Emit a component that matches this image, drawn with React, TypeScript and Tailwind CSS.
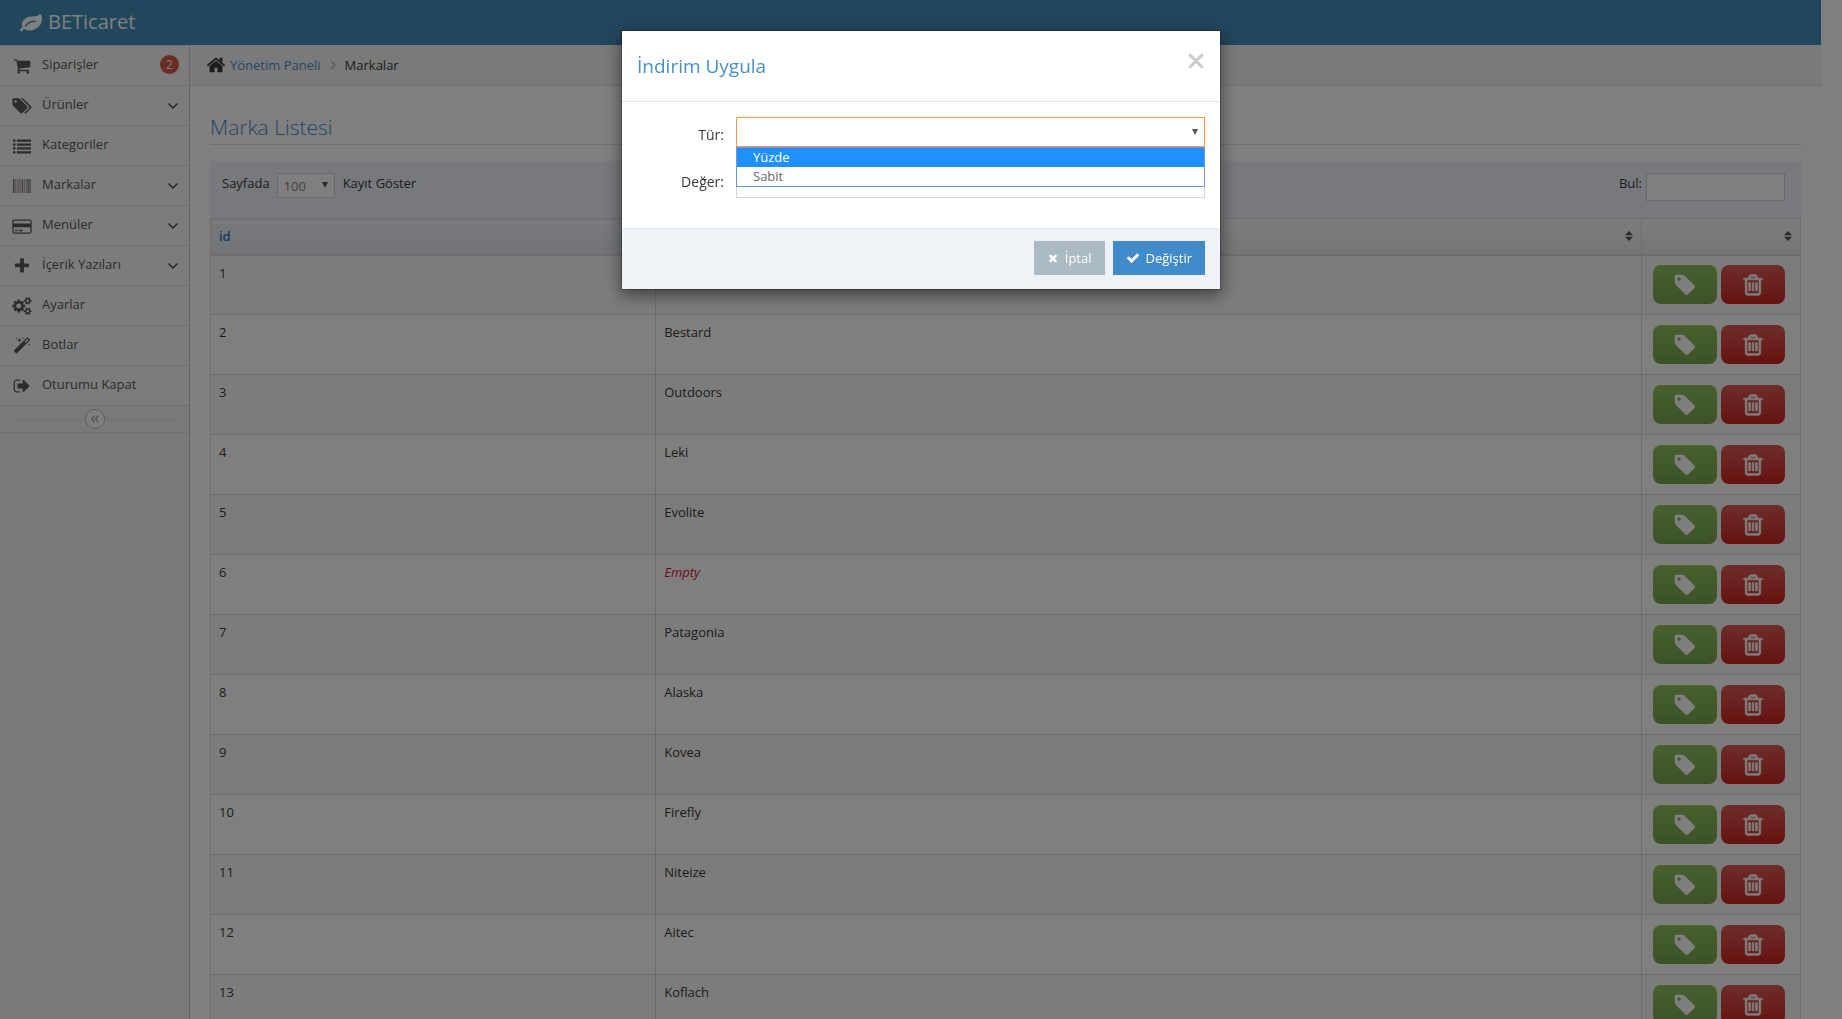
import type { ReactNode } from "react";

const ICONS = {
  leaf: "M1280 832q0-26-19-45t-45-19q-172 0-318 49.5t-259.5 134-235.5 219.5q-19 21-19 45 0 26 19 45t45 19q24 0 45-19 27-24 74-71t67-66q137-124 268.5-176t313.5-52q26 0 45-19t19-45zm512-198q0 95-20 193-46 224-184.5 383t-357.5 268q-214 108-438 108-148 0-286-47-15-5-88-42t-96-37q-16 0-39.5 32t-45 70-52.5 70-60 32q-43 0-63.5-17.5t-45.5-59.5q-2-4-6-11t-5.5-10-3-9.5-1.5-13.5q0-35 31-73.5t68-65.5 68-56 31-48q0-4-14-38t-16-44q-9-51-9-104 0-115 43.5-220t119-184.5 170.5-139 204-95.5q55-18 145-25.5t179.5-9 178.5-6 163.5-24 113.5-56.5l29.5-29.5 29.5-28 27-20 36.5-16 43.5-4.5q39 0 70.5 46t47.5 112 24 124 8 96z",
  cart: "M704 1536q0 52-38 90t-90 38-90-38-38-90 38-90 90-38 90 38 38 90zm896 0q0 52-38 90t-90 38-90-38-38-90 38-90 90-38 90 38 38 90zm128-1088v512q0 24-16.5 42.5t-40.5 21.5l-1044 122q13 60 13 70 0 16-24 64h920q26 0 45 19t19 45-19 45-45 19h-1024q-26 0-45-19t-19-45q0-11 8-31.5t16-36 21.5-40 15.5-29.5l-177-823h-204q-26 0-45-19t-19-45 19-45 45-19h256q16 0 28.5 6.5t19.5 15.5 13 24.5 8 26 5.5 29.5 4.5 26h1201q26 0 45 19t19 45z",
  tags: "M448 448q0-53-37.5-90.5t-90.5-37.5-90.5 37.5-37.5 90.5 37.5 90.5 90.5 37.5 90.5-37.5 37.5-90.5zm1067 576q0 53-37 90l-491 492q-39 37-91 37-53 0-90-37l-715-716q-38-37-64.5-101t-26.5-117v-416q0-52 38-90t90-38h416q53 0 117 26.5t102 64.5l715 714q37 39 37 91zm384 0q0 53-37 90l-491 492q-39 37-91 37-36 0-59-14t-53-45l470-470q37-37 37-90 0-52-37-91l-715-714q-38-38-102-64.5t-117-26.5h224q53 0 117 26.5t102 64.5l715 714q37 39 37 91z",
  tag: "M576 448q0-53-37.5-90.5t-90.5-37.5-90.5 37.5-37.5 90.5 37.5 90.5 90.5 37.5 90.5-37.5 37.5-90.5zm1067 576q0 53-37 90l-491 492q-39 37-91 37-53 0-90-37l-715-716q-38-37-64.5-101t-26.5-117v-416q0-52 38-90t90-38h416q53 0 117 26.5t102 64.5l715 714q37 39 37 91z",
  list: "M0 256h256v224h-256zM384 256h1408v224h-1408zM0 640h256v224h-256zM384 640h1408v224h-1408zM0 1024h256v224h-256zM384 1024h1408v224h-1408zM0 1408h256v224h-256zM384 1408h1408v224h-1408z",
  card: "M160 256h1600q66 0 113 47t47 113v1088q0 66-47 113t-113 47h-1600q-66 0-113-47t-47-113v-1088q0-66 47-113t113-47zm0 128q-32 0-32 32v224h1664v-224q0-32-32-32zm-32 640v480q0 32 32 32h1600q32 0 32-32v-480zM256 1280h256v128h-256zM640 1280h384v128h-384z",
  plus: "M1600 736v192q0 40-28 68t-68 28h-416v416q0 40-28 68t-68 28h-192q-40 0-68-28t-28-68v-416h-416q-40 0-68-28t-28-68v-192q0-40 28-68t68-28h416v-416q0-40 28-68t68-28h192q40 0 68 28t28 68v416h416q40 0 68 28t28 68z",
  cogs: "M896 896q0-106-75-181t-181-75-181 75-75 181 75 181 181 75 181-75 75-181zm768 512q0-52-38-90t-90-38-90 38-38 90q0 53 37.5 90.5t90.5 37.5 90.5-37.5 37.5-90.5zm0-1024q0-52-38-90t-90-38-90 38-38 90q0 53 37.5 90.5t90.5 37.5 90.5-37.5 37.5-90.5zm-384 421v185q0 10-7 19.5t-16 10.5l-155 24q-11 35-32 76 34 48 90 115 7 11 7 20 0 12-7 19-23 30-82.5 89.5t-78.5 59.5q-11 0-21-7l-115-90q-37 19-77 31-11 108-23 155-7 24-30 24h-186q-11 0-20-7.5t-10-17.5l-23-153q-34-10-75-31l-118 89q-7 7-20 7-11 0-21-8-144-133-144-160 0-9 7-19 10-14 41-53t47-61q-23-44-35-82l-152-24q-10-1-17-9.5t-7-19.5v-185q0-10 7-19.5t16-10.5l155-24q11-35 32-76-34-48-90-115-7-11-7-20 0-12 7-20 22-30 82-89t79-59q11 0 21 7l115 90q34-18 77-32 11-108 23-154 7-24 30-24h186q11 0 20 7.5t10 17.5l23 153q34 10 75 31l118-89q8-7 20-7 11 0 21 8 144 133 144 160 0 9-7 19-12 16-42 54t-45 60q23 48 34 82l152 23q10 2 17 10.5t7 19.5zm640 533v140q0 16-149 31-12 27-30 52 51 113 51 138 0 4-4 7-122 71-124 71-8 0-46-47t-52-68q-20 2-30 2t-30-2q-14 21-52 68t-46 47q-2 0-124-71-4-3-4-7 0-25 51-138-18-25-30-52-149-15-149-31v-140q0-16 149-31 13-29 30-52-51-113-51-138 0-4 4-7 4-2 35-20t59-34 30-16q8 0 46 46.5t52 67.5q20-2 30-2t30 2q51-71 92-112l6-2q4 0 124 70 4 3 4 7 0 25-51 138 17 23 30 52 149 15 149 31zm0-1024v140q0 16-149 31-12 27-30 52 51 113 51 138 0 4-4 7-122 71-124 71-8 0-46-47t-52-68q-20 2-30 2t-30-2q-14 21-52 68t-46 47q-2 0-124-71-4-3-4-7 0-25 51-138-18-25-30-52-149-15-149-31v-140q0-16 149-31 13-29 30-52-51-113-51-138 0-4 4-7 4-2 35-20t59-34 30-16q8 0 46 46.5t52 67.5q20-2 30-2t30 2q51-71 92-112l6-2q4 0 124 70 4 3 4 7 0 25-51 138 17 23 30 52 149 15 149 31z",
  magic: "M1254 581l293-293-107-107-293 293zm447-293q0 27-18 45l-1286 1286q-18 18-45 18t-45-18l-198-198q-18-18-18-45t18-45l1286-1286q18-18 45-18t45 18l198 198q18 18 18 45zm-1351-190l98 30-98 30-30 98-30-98-98-30 98-30 30-98zm350 162l196 60-196 60-60 196-60-196-196-60 196-60 60-196zm930 478l98 30-98 30-30 98-30-98-98-30 98-30 30-98zm-640-640l98 30-98 30-30 98-30-98-98-30 98-30 30-98z",
  signOut: "M704 1440q0 4 1 20t.5 26.5-3 23.5-10 19.5-20.5 6.5h-320q-119 0-203.5-84.5t-84.5-203.5v-704q0-119 84.5-203.5t203.5-84.5h320q13 0 22.5 9.5t9.5 22.5q0 4 1 20t.5 26.5-3 23.5-10 19.5-20.5 6.5h-320q-66 0-113 47t-47 113v704q0 66 47 113t113 47h312l11.5 1 11.5 3 8 5.5 7 9 2 13.5zm928-544q0 26-19 45l-544 544q-19 19-45 19t-45-19-19-45v-288h-448q-26 0-45-19t-19-45v-384q0-26 19-45t45-19h448v-288q0-26 19-45t45-19 45 19l544 544q19 19 19 45z",
  home: "M1472 992v480q0 26-19 45t-45 19h-384v-384h-256v384h-384q-26 0-45-19t-19-45v-480q0-1 .5-3t.5-3l575-474 575 474q1 2 1 6zm223-69l-62 74q-8 9-21 11h-3q-13 0-21-7l-692-577-692 577q-12 8-24 7-13-2-21-11l-62-74q-8-10-7-23.5t11-21.5l719-599q32-26 76-26t76 26l244 204v-195q0-14 9-23t23-9h192q14 0 23 9t9 23v408l219 182q10 8 11 21.5t-7 23.5z",
  trash: "M704 736v576q0 14-9 23t-23 9h-64q-14 0-23-9t-9-23v-576q0-14 9-23t23-9h64q14 0 23 9t9 23zm256 0v576q0 14-9 23t-23 9h-64q-14 0-23-9t-9-23v-576q0-14 9-23t23-9h64q14 0 23 9t9 23zm256 0v576q0 14-9 23t-23 9h-64q-14 0-23-9t-9-23v-576q0-14 9-23t23-9h64q14 0 23 9t9 23zm128 724v-948h-896v948q0 22 7 40.5t14.5 27 10.5 8.5h832q3 0 10.5-8.5t14.5-27 7-40.5zm-672-1076h448l-48-117q-7-9-17-11h-317q-10 2-17 11zm928 32v64q0 14-9 23t-23 9h-96v948q0 83-47 143.5t-113 60.5h-832q-66 0-113-58.5t-47-141.5v-952h-96q-14 0-23-9t-9-23v-64q0-14 9-23t23-9h309l70-167q15-37 54-63t79-26h320q40 0 79 26t54 63l70 167h309q14 0 23 9t9 23z",
  times: "M1490 1322q0 40-28 68l-136 136q-28 28-68 28t-68-28l-294-294-294 294q-28 28-68 28t-68-28l-136-136q-28-28-28-68t28-68l294-294-294-294q-28-28-28-68t28-68l136-136q28-28 68-28t68 28l294 294 294-294q28-28 68-28t68 28l136 136q28 28 28 68t-28 68l-294 294 294 294q28 28 28 68z",
  check: "M1671 566q0 40-28 68l-724 724-136 136q-28 28-68 28t-68-28l-136-136-362-362q-28-28-28-68t28-68l136-136q28-28 68-28t68 28l294 295 656-657q28-28 68-28t68 28l136 136q28 28 28 68z",
};

type IconName = keyof typeof ICONS;

function Icon({ name, className, wide = false }: { name: IconName; className: string; wide?: boolean }) {
  return (
    <svg viewBox={wide ? "0 0 1920 1792" : "0 0 1792 1792"} className={className} fill="currentColor" aria-hidden="true">
      <path
        d={ICONS[name]}
        fillRule={name === "card" ? "evenodd" : "nonzero"}
        stroke={name === "trash" ? "currentColor" : "none"}
        strokeWidth="50"
      />
    </svg>
  );
}

// Thin bars tinted one by one, 18 units across.
const BARS = ["#7a6a66", "#a8a8b4", "#b59a9a", "#8a96a8", "#c0a890", "#7c8494", "#b8a0b8", "#98a890", "#8c7c94", "#77706e"];

function BarcodeIcon() {
  return (
    <svg viewBox="0 0 18 14" className="h-3.5 w-[18px]" aria-hidden="true">
      {BARS.map((fill, i) => (
        <rect key={i} x={i === 9 ? 16.5 : i * 1.8} width={i % 4 === 0 ? 1.4 : 1.1} height="14" fill={fill} />
      ))}
    </svg>
  );
}

function Chevron({ d, className }: { d: string; className: string }) {
  return (
    <svg viewBox="0 0 12 12" className={className} fill="none" stroke="currentColor" strokeWidth="1.4" aria-hidden="true">
      <path d={d} />
    </svg>
  );
}

const MENU: { label: string; icon: IconName | "barcode"; wide?: boolean; badge?: string; sub?: boolean }[] = [
  { label: "Siparişler", icon: "cart", badge: "2" },
  { label: "Ürünler", icon: "tags", wide: true, sub: true },
  { label: "Kategoriler", icon: "list" },
  { label: "Markalar", icon: "barcode", sub: true },
  { label: "Menüler", icon: "card", wide: true, sub: true },
  { label: "İçerik Yazıları", icon: "plus", sub: true },
  { label: "Ayarlar", icon: "cogs", wide: true },
  { label: "Botlar", icon: "magic" },
  { label: "Oturumu Kapat", icon: "signOut" },
];

const BRANDS = [
  "",
  "Bestard",
  "Outdoors",
  "Leki",
  "Evolite",
  null,
  "Patagonia",
  "Alaska",
  "Kovea",
  "Firefly",
  "Niteize",
  "Aitec",
  "Koflach",
];

function Sidebar() {
  return (
    <aside className="w-[190px] flex-none border-r border-[#ccc] bg-[#f2f2f2]">
      <nav>
        <ul>
          {MENU.map((item) => (
            <li key={item.label} className="h-10 border-t border-[#e5e5e5] bg-[#f9f9f9]">
              <a href="#" className="flex h-full items-center pr-2.5 pl-2 text-[#585858]">
                <span className="flex w-7 justify-center">
                  {item.icon === "barcode" ? (
                    <BarcodeIcon />
                  ) : (
                    <Icon name={item.icon} wide={item.wide} className={item.wide ? "h-[18px] w-5" : "size-[18px]"} />
                  )}
                </span>
                <span className="flex-1 pb-0.5 pl-1.5 leading-[17px]">{item.label}</span>
                {item.badge && (
                  <span className="mb-0.5 flex size-[19px] items-center justify-center rounded-full bg-[#d15b47] text-xs text-white">
                    {item.badge}
                  </span>
                )}
                {item.sub && <Chevron d="M1.5 3.5 6 8l4.5-4.5" className="size-3 text-[#444]" />}
              </a>
            </li>
          ))}
        </ul>
      </nav>
      <div className="flex h-7 items-center border-y border-[#e0e0e0] bg-[#f3f3f3] px-[15px]">
        <span className="h-px flex-1 bg-[#e0e0e0]" />
        <button
          type="button"
          aria-label="Menüyü daralt"
          className="flex size-5 items-center justify-center rounded-full border border-[#bbb] bg-white text-[#999]"
        >
          <Chevron d="M5.5 2 2 6l3.5 4M10 2 6.500 6 10 10" className="size-2.5" />
        </button>
        <span className="h-px flex-1 bg-[#e0e0e0]" />
      </div>
    </aside>
  );
}

function SortIcon() {
  return (
    <svg viewBox="0 0 8 10" className="ml-auto h-2.5 w-2" fill="#555" aria-hidden="true">
      <path d="M4 0 8 4.200H0zM0 5.800h8L4 10z" />
    </svg>
  );
}

function Th({ children, sorted = false, className }: { children?: ReactNode; sorted?: boolean; className: string }) {
  return (
    <th
      className={`${className} ${
        sorted ? "from-[#eff3f8] to-[#e3e7ed] text-[#307ecc]" : "from-[#f8f8f8] to-[#ececec]"
      } h-9 border border-b-2 border-[#ddd] bg-linear-to-b px-2 text-left font-semibold`}
    >
      {children}
    </th>
  );
}

function BrandTable() {
  return (
    <table className="w-full table-fixed border-collapse">
      <thead>
        <tr>
          <Th sorted className="w-[28%]">
            id
          </Th>
          <Th className="w-[62%]">
            <SortIcon />
          </Th>
          <Th className="w-[10%]">
            <SortIcon />
          </Th>
        </tr>
      </thead>
      <tbody>
        {BRANDS.map((brand, i) => (
          <tr key={i} className="h-[60px] odd:bg-[#f9f9f9]">
            <td className="border border-[#ddd] px-2 py-[7px] align-top">{i + 1}</td>
            <td className="border border-[#ddd] px-2 py-[7px] align-top">
              {brand === null ? <em className="text-[#dd1144]">Empty</em> : brand}
            </td>
            <td className="border border-[#ddd] px-[11px] py-0">
              <div className="flex gap-1">
                <button
                  type="button"
                  aria-label="İndirim uygula"
                  className="flex h-[39px] w-16 flex-none items-center justify-center rounded-lg bg-linear-to-b from-[#8fc25c] to-[#79a64e] text-white"
                >
                  <Icon name="tag" className="size-6" />
                </button>
                <button
                  type="button"
                  aria-label="Sil"
                  className="flex h-[39px] w-16 flex-none items-center justify-center rounded-lg bg-linear-to-b from-[#dc5a54] to-[#cb2420] text-white"
                >
                  <Icon name="trash" className="size-6" />
                </button>
              </div>
            </td>
          </tr>
        ))}
      </tbody>
    </table>
  );
}

function DiscountModal() {
  return (
    <div className="fixed inset-0 flex items-start justify-center bg-black/50 pt-[30px]">
      <div
        role="dialog"
        aria-modal="true"
        aria-labelledby="discount-title"
        className="w-[600px] border border-black/20 bg-white bg-clip-padding shadow-[0_5px_15px_rgba(0,0,0,0.5)]"
      >
        <div className="flex h-[71px] items-center justify-between border-b border-[#e5e5e5] px-[15px]">
          <h4 id="discount-title" className="text-[19px] text-[#478fca]">
            İndirim Uygula
          </h4>
          <button type="button" aria-label="Kapat" className="-mt-2.5 text-[#ccc]">
            <svg viewBox="0 0 16 16" className="size-[18px]" stroke="currentColor" strokeWidth="2.800" aria-hidden="true">
              <path d="M2 2l12 12M14 2 2 14" />
            </svg>
          </button>
        </div>
        <form className="flex flex-col gap-[17px] px-[15px] pt-[15px] pb-[30px] text-sm">
          <div className="flex">
            <label htmlFor="discount-type" className="w-[87px] flex-none pt-2 text-right leading-5">
              Tür:
            </label>
            <div className="relative ml-3 flex-1">
              <select
                id="discount-type"
                defaultValue=""
                className="block h-[30px] w-full appearance-none border border-[#f59942] bg-white px-3 text-[#696969] outline-none"
              >
                <option value=""></option>
                <option value="percent">Yüzde</option>
                <option value="fixed">Sabit</option>
              </select>
              <svg viewBox="0 0 6 6" className="absolute top-3 right-[7px] size-1.5" fill="#555" aria-hidden="true">
                <path d="M0 0h6L3 6z" />
              </svg>
              <ul
                role="listbox"
                aria-label="Tür"
                className="absolute inset-x-0 top-full z-10 border border-[#6f95d8] bg-white text-[13px] leading-[19px] text-[#696969]"
              >
                <li role="option" aria-selected="true" className="bg-[#1e90ff] px-4 text-white">
                  Yüzde
                </li>
                <li role="option" aria-selected="false" className="px-4">
                  Sabit
                </li>
              </ul>
            </div>
          </div>
          <div className="flex">
            <label htmlFor="discount-value" className="w-[87px] flex-none pt-2 text-right leading-5">
              Değer:
            </label>
            <input id="discount-value" type="text" className="ml-3 h-[34px] min-w-0 flex-1 border border-[#d5d5d5] px-3" />
          </div>
        </form>
        <div className="flex justify-end gap-2 border-t border-[#e4e9ee] bg-[#eff3f8] px-[15px] pt-3 pb-3.5 text-shadow-[0_-1px_0_rgba(0,0,0,0.25)]">
          <button type="button" className="flex h-[34px] items-center gap-1.5 bg-[#abbac3] px-[13px] text-white">
            <Icon name="times" className="size-3" />
            İptal
          </button>
          <button type="button" className="flex h-[34px] items-center gap-1.5 bg-[#428bca] px-[13px] text-white">
            <Icon name="check" className="size-3.5" />
            Değiştir
          </button>
        </div>
      </div>
    </div>
  );
}

export default function App() {
  return (
    <div className="h-screen overflow-hidden bg-white pr-[21px] font-['Open_Sans',sans-serif] text-[13px] leading-5 text-[#393939]">
      <header className="flex h-[45px] items-center bg-[#438eb9] px-5 pb-0.5 text-xl text-white">
        <a href="#" className="flex items-center gap-1.5">
          <Icon name="leaf" className="size-[22px]" />
          BETicaret
        </a>
      </header>
      <div className="flex min-h-full">
        <Sidebar />
        <main className="min-w-0 flex-1">
          <nav className="flex h-[41px] items-center border-b border-[#e5e5e5] bg-[#f5f5f5] pl-4">
            <Icon name="home" className="size-5" />
            <a href="#" className="ml-1 text-[#4c8fbd]">
              Yönetim Paneli
            </a>
            <Chevron d="M4 2l4 4-4 4" className="mx-1.5 size-3 text-[#b2b6bf]" />
            <span>Markalar</span>
          </nav>
          <div className="px-5 pt-6">
            <h3 className="mb-4 border-b border-[#d5e3ef] text-[21px] leading-[34px] font-light text-[#478fca]">
              Marka Listesi
            </h3>
            <div className="flex h-[57px] items-start justify-between bg-[#eff3f8] px-3 pt-3">
              <label className="flex items-start">
                <span>Sayfada</span>
                <span className="relative mr-2 ml-[7px]">
                  <select
                    defaultValue="100"
                    className="block h-[25px] w-[58px] appearance-none border border-[#d5d5d5] bg-white px-1.5 text-[#858585]"
                  >
                    <option>100</option>
                  </select>
                  <svg viewBox="0 0 6 6" className="absolute top-[9px] right-[7px] size-1.5" fill="#555" aria-hidden="true">
                    <path d="M0 0h6L3 6z" />
                  </svg>
                </span>
                <span>Kayıt Göster</span>
              </label>
              <label className="flex items-start gap-1 pr-1">
                <span>Bul:</span>
                <input type="text" className="h-7 w-[139px] border border-[#d5d5d5] bg-white px-1" />
              </label>
            </div>
            <BrandTable />
          </div>
        </main>
      </div>
      <DiscountModal />
    </div>
  );
}
